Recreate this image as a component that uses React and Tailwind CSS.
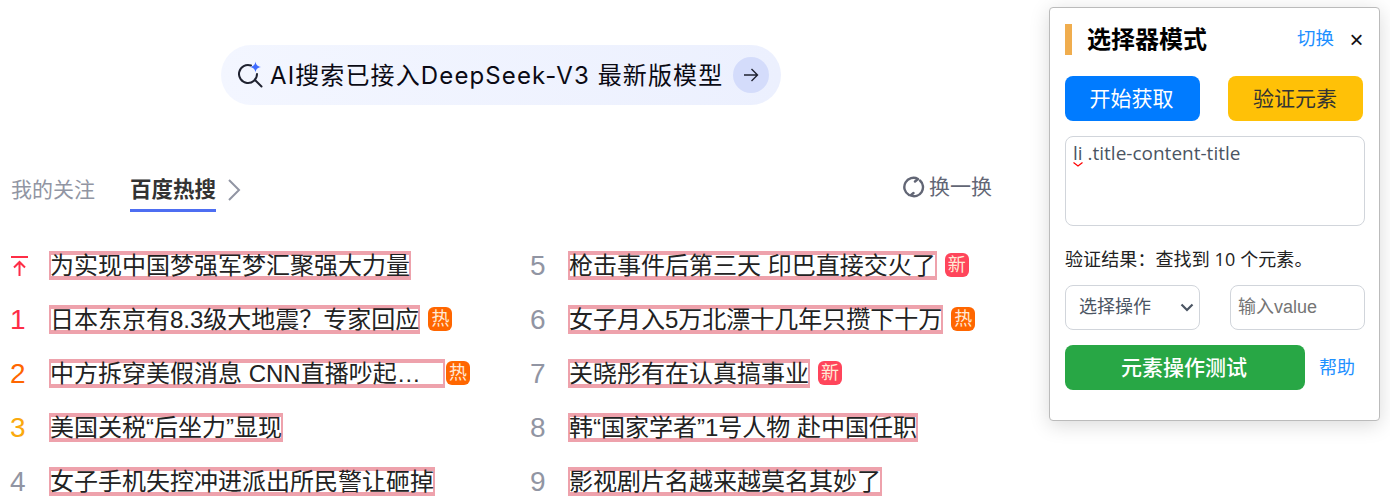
import React from "react";

const font = { fontFamily: '"Liberation Sans","Noto Sans CJK SC",sans-serif' };
const openSans = { fontFamily: '"Open Sans","Noto Sans CJK SC",sans-serif' };

function Badge({ kind, tight }) {
  const hot = kind === "hot";
  return (
    <span className={`flex h-6 w-6 shrink-0 items-center justify-center rounded-md text-[18px] leading-6 text-[#ffe9d6] ${tight ? "ml-px" : "ml-2"} ${hot ? "bg-[#ff6600]" : "bg-[#ff455b]"}`}>
      {hot ? "热" : "新"}
    </span>
  );
}

function Pin() {
  return (
    <svg width="18" height="21" viewBox="0 0 18 21" fill="none" stroke="#fe2d46" strokeWidth="2" className="block">
      <path d="M1 2h17" />
      <path d="M9.5 21V7M4 12.5l5.5-5.5 5.5 5.5" />
    </svg>
  );
}

function Row({ rank, rankClass, title, badge, clipW, shift }) {
  return (
    <div className="flex h-[54px] items-center">
      <div className={`w-[38px] shrink-0 text-[28px] leading-[29px] ${rankClass}`}>
        <span className={`block ${shift ? "-ml-px" : ""}`}>{rank}</span>
      </div>
      <div className="flex items-center">
        <span className={`block h-[29px] border-x-2 border-y-4 border-[#eea2ac] ${clipW ? "w-[396px]" : ""}`}>
          <span className="-mx-px -my-1 block h-[29px] truncate text-[24px] leading-[29px] text-[#222222]">
            {title}
          </span>
        </span>
        {badge && <Badge kind={badge} tight={clipW} />}
      </div>
    </div>
  );
}

const left = [
  { rank: <Pin />, rankClass: "text-[#fe2d46]", title: "为实现中国梦强军梦汇聚强大力量" },
  { rank: "1", rankClass: "text-[#fe2d46]", title: "日本东京有8.3级大地震？专家回应", badge: "hot" },
  { rank: "2", rankClass: "text-[#ff6600]", title: "中方拆穿美假消息 CNN直播吵起来了啊", badge: "hot", clipW: true },
  { rank: "3", rankClass: "text-[#faa90e]", title: "美国关税“后坐力”显现" },
  { rank: "4", rankClass: "text-[#9195a3]", title: "女子手机失控冲进派出所民警让砸掉" },
];
const right = [
  { rank: "5", title: "枪击事件后第三天 印巴直接交火了", badge: "new" },
  { rank: "6", title: "女子月入5万北漂十几年只攒下十万", badge: "hot" },
  { rank: "7", title: "关晓彤有在认真搞事业", badge: "new" },
  { rank: "8", title: "韩“国家学者”1号人物 赴中国任职" },
  { rank: "9", title: "影视剧片名越来越莫名其妙了" },
];

function Panel() {
  return (
    <div className="absolute left-[1049px] top-[7px] h-[414px] w-[331px] rounded border border-[#bbbbbb] bg-white px-[15px] pt-[15px] shadow-[0_4px_20px_rgba(0,0,0,0.15)]">
      <div className="flex h-[32px] items-center">
        <div className="h-[31px] w-[7px] bg-[#f0ad4e]" />
        <div className="ml-[15px] flex-1 pt-[2px] text-[24px] font-bold leading-[32px] text-black">选择器模式</div>
        <span className="text-[18.5px] leading-6 text-[#1e90ff]">切换</span>
        <span className="ml-[15px] w-[15px] pt-[2px] text-center text-[24px] font-light leading-6 text-[#111111]">×</span>
      </div>
      <div className="mt-[21px] flex w-[298px] justify-between">
        <button className="h-[45px] w-[135px] rounded-lg bg-[#007bff] pr-[2px] text-[21px] text-white">开始获取</button>
        <button className="h-[45px] w-[135px] rounded-lg bg-[#ffc107] pr-px text-[21px] text-[#333333]">验证元素</button>
      </div>
      <div className="relative mt-[15px]">
        <textarea
          spellCheck={false}
          readOnly
          defaultValue="li .title-content-title"
          style={openSans}
          className="block h-[90px] w-[300px] resize-none rounded-lg border border-[#d1d5db] px-[7px] py-[3px] text-[19px] leading-[26px] text-[#4b5563] outline-none"
        />
        <svg width="10" height="5" viewBox="0 0 10 5" className="absolute left-[8px] top-[26px]" fill="none" stroke="#ff0000" strokeWidth="1.2">
          <path d="M0.5 0.5l4.5 3.5 4.5-3.5" />
        </svg>
      </div>
      <div style={openSans} className="mt-[21px] h-6 w-[300px] whitespace-nowrap text-[18px] leading-6 tracking-[0.1px] text-[#222222]">验证结果：查找到 10 个元素。</div>
      <div className="mt-[14px] flex w-[300px] justify-between">
        <div className="relative">
          <select className="block h-[45px] w-[135px] appearance-none rounded-lg border border-[#d1d5db] bg-white pl-[13px] text-[18px] text-[#4b5563] outline-none">
            <option>选择操作</option>
          </select>
          <svg width="14" height="9" viewBox="0 0 14 9" fill="none" stroke="#4b5563" strokeWidth="2.2" className="absolute left-[115px] top-[18px]">
            <path d="M1.5 1.5L7 7l5.5-5.5" />
          </svg>
        </div>
        <input
          placeholder="输入value"
          className="h-[45px] w-[135px] rounded-lg border border-[#d1d5db] pl-[7px] pr-2 text-[18px] outline-none placeholder:text-[#757575]"
        />
      </div>
      <div className="mt-[15px] flex items-center">
        <button className="h-[45px] w-[240px] rounded-lg bg-[#28a745] pr-[2px] text-[21px] font-medium text-white">元素操作测试</button>
        <span className="ml-[14px] text-[18px] leading-6 text-[#1e90ff]">帮助</span>
      </div>
    </div>
  );
}

export default function App() {
  return (
    <div style={font} className="relative h-[501px] w-[1390px] overflow-hidden bg-white">
      <div className="ml-[221px] pt-[45px]">
        <div className="flex h-[60px] w-[560px] items-center rounded-[30px] bg-gradient-to-r from-[#f3f6ff] to-[#ecf0fe] pl-[17px] pr-3">
          <svg width="26" height="28" viewBox="0 0 26 28" fill="none" className="shrink-0">
            <path d="M13 4.5A9 9 0 1 0 19 13" stroke="#1f2230" strokeWidth="2" strokeLinecap="round" />
            <path d="M17 19l6.5 6.5" stroke="#1f2230" strokeWidth="2" strokeLinecap="round" />
            <path d="M17.5 0.5c.6 3.4 1.8 4.8 5.5 5.5-3.7.7-4.9 2.1-5.5 5.5-.6-3.4-1.8-4.8-5.5-5.5 3.7-.7 4.9-2.1 5.5-5.5z" fill="#3f6bff" />
          </svg>
          <span style={{ fontFamily: 'Inter,"Noto Sans CJK SC",sans-serif' }} className="ml-[6px] flex-1 whitespace-nowrap pt-[2px] text-[24px] leading-[30px] tracking-[1.12px] text-[#0a0a14]">AI搜索已接入DeepSeek-V3 最新版模型</span>
          <span className="flex h-9 w-9 shrink-0 items-center justify-center rounded-full bg-[#d4dcfb]">
            <svg width="16" height="14" viewBox="0 0 16 14" fill="none" stroke="#1f2230" strokeWidth="1.4">
              <path d="M1 7h13.5M8.5 1l6 6-6 6" />
            </svg>
          </span>
        </div>
      </div>

      <div className="mt-[67px] flex h-[40px] w-[992px] items-start pl-[11px]">
        <span className="text-[21px] leading-[36px] text-[#9195a3]">我的关注</span>
        <div className="ml-[35px] h-10 border-b-[3px] border-[#4e6ef2]">
          <span className="block text-[21.5px] font-bold leading-[37px] text-[#333333]">百度热搜</span>
        </div>
        <svg width="14" height="22" viewBox="0 0 14 22" fill="none" stroke="#9195a3" strokeWidth="2" className="ml-[11px] mt-[7px]">
          <path d="M2 1l10 10L2 21" />
        </svg>
        <div className="ml-auto flex items-center">
          <svg width="22" height="22" viewBox="0 0 22 22" fill="none" stroke="#626675" strokeWidth="2.4" strokeLinecap="round" strokeLinejoin="round">
            <path d="M6 19A9 9 0 0 1 15 3L12 5.5" />
            <path d="M17 4.5A9 9 0 0 1 7.5 19.5L10.5 17" />
          </svg>
          <span className="ml-[4px] text-[21px] leading-[30px] text-[#626675]">换一换</span>
        </div>
      </div>

      <div className="mt-[26px] flex pl-[11px]">
        <div className="w-[519px] shrink-0">
          {left.map((r, i) => <Row key={i} {...r} shift />)}
        </div>
        <div>
          {right.map((r, i) => <Row key={i} {...r} rankClass="text-[#9195a3]" />)}
        </div>
      </div>

      <Panel />
    </div>
  );
}
